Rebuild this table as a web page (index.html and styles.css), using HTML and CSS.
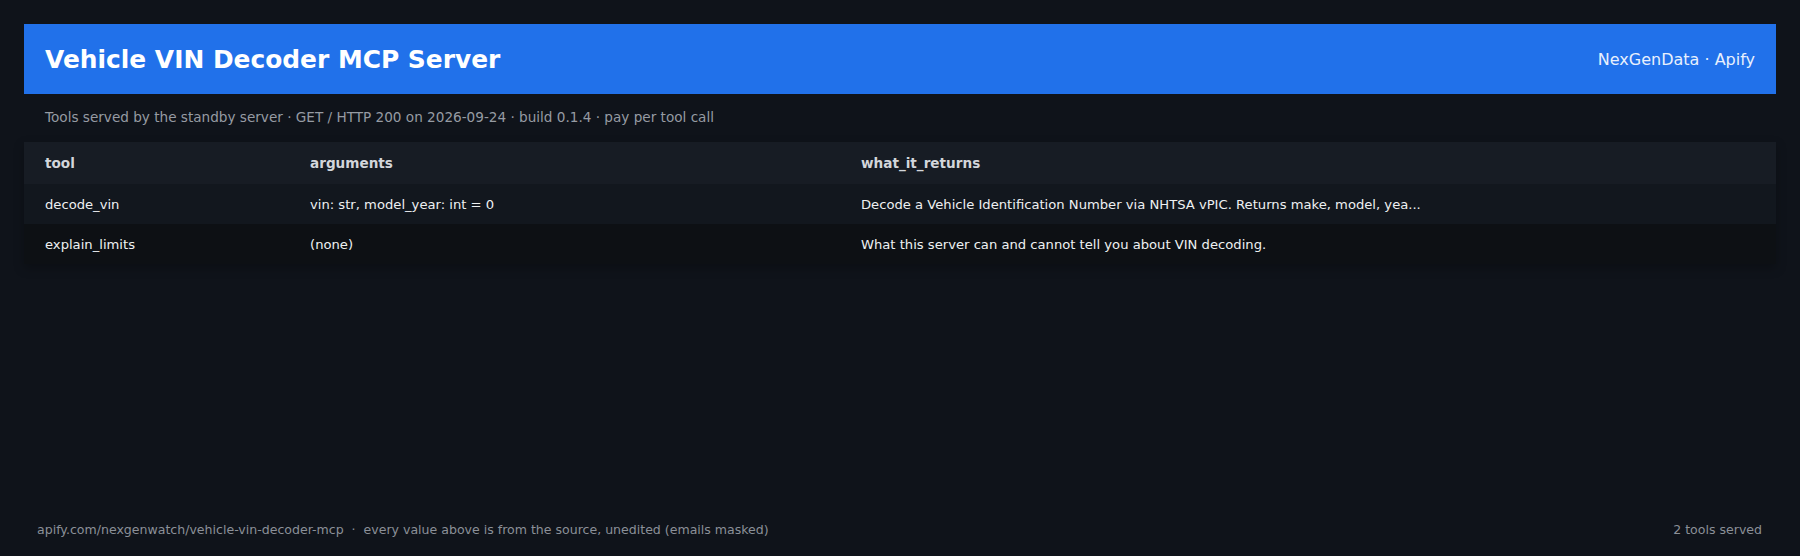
FILE: index.html
```html
<!DOCTYPE html>
<html lang="en">
<head>
    <meta charset="UTF-8">
    <title>Vehicle VIN Decoder MCP Server</title>
    <link rel="stylesheet" href="styles.css">
</head>
<body>

    <div class="page">
        <header class="banner">
            <h1>Vehicle VIN Decoder MCP Server</h1>
            <span class="brand">NexGenData · Apify</span>
        </header>

        <p class="subtitle">Tools served by the standby server · GET / HTTP 200 on 2026-09-24 · build 0.1.4 · pay per tool call</p>

        <table class="tools">
            <thead>
                <tr>
                    <th class="col-tool">tool</th>
                    <th class="col-args">arguments</th>
                    <th>what_it_returns</th>
                </tr>
            </thead>
            <tbody>
                <tr>
                    <td>decode_vin</td>
                    <td>vin: str, model_year: int = 0</td>
                    <td>Decode a Vehicle Identification Number via NHTSA vPIC. Returns make, model, yea...</td>
                </tr>
                <tr>
                    <td>explain_limits</td>
                    <td>(none)</td>
                    <td>What this server can and cannot tell you about VIN decoding.</td>
                </tr>
            </tbody>
        </table>
    </div>

    <footer class="footer">
        <span>apify.com/nexgenwatch/vehicle-vin-decoder-mcp &nbsp;·&nbsp; every value above is from the source, unedited (emails masked)</span>
        <span>2 tools served</span>
    </footer>

</body>
</html>
```

FILE: styles.css
```css
html, body {
    height: 100%;
}
body {
    font-family: 'DejaVu Sans', sans-serif;
    margin: 0;
    padding: 0;
    background: #0f131a;
    color: #e6e8eb;
    display: flex;
    flex-direction: column;
}
.page {
    flex: 1;
    padding: 24px 24px 0;
}
.banner {
    display: flex;
    justify-content: space-between;
    align-items: center;
    height: 70px;
    padding: 0 21px;
    background: #2171ea;
}
.banner h1 {
    margin: 0;
    font-size: 24.9px;
    font-weight: bold;
    color: #fff;
}
.brand {
    font-size: 16px;
    color: #e8f0fd;
}
.subtitle {
    margin: 0;
    padding: 15px 21px 0;
    height: 33px;
    font-size: 13.6px;
    color: #969ba3;
}
.tools {
    width: 100%;
    border-collapse: collapse;
    box-shadow: 0 4px 10px rgba(0, 0, 0, 0.25);
}
.tools th,
.tools td {
    text-align: left;
    padding: 0 21px;
}
.tools th {
    height: 42px;
    font-size: 13.6px;
    font-weight: bold;
    color: #d3d6db;
    background: #171c24;
}
.tools td {
    height: 40px;
    font-size: 13.15px;
    color: #eef0f2;
}
.tools tbody tr:nth-child(1) {
    background: #12171e;
}
.tools tbody tr:nth-child(2) {
    background: #0d1014;
}
.col-tool {
    width: 223px;
}
.col-args {
    width: 509px;
}
.footer {
    display: flex;
    justify-content: space-between;
    align-items: center;
    padding: 0 38px 20px 37px;
    height: 14px;
    font-size: 12.55px;
    color: #8b9098;
}
```
